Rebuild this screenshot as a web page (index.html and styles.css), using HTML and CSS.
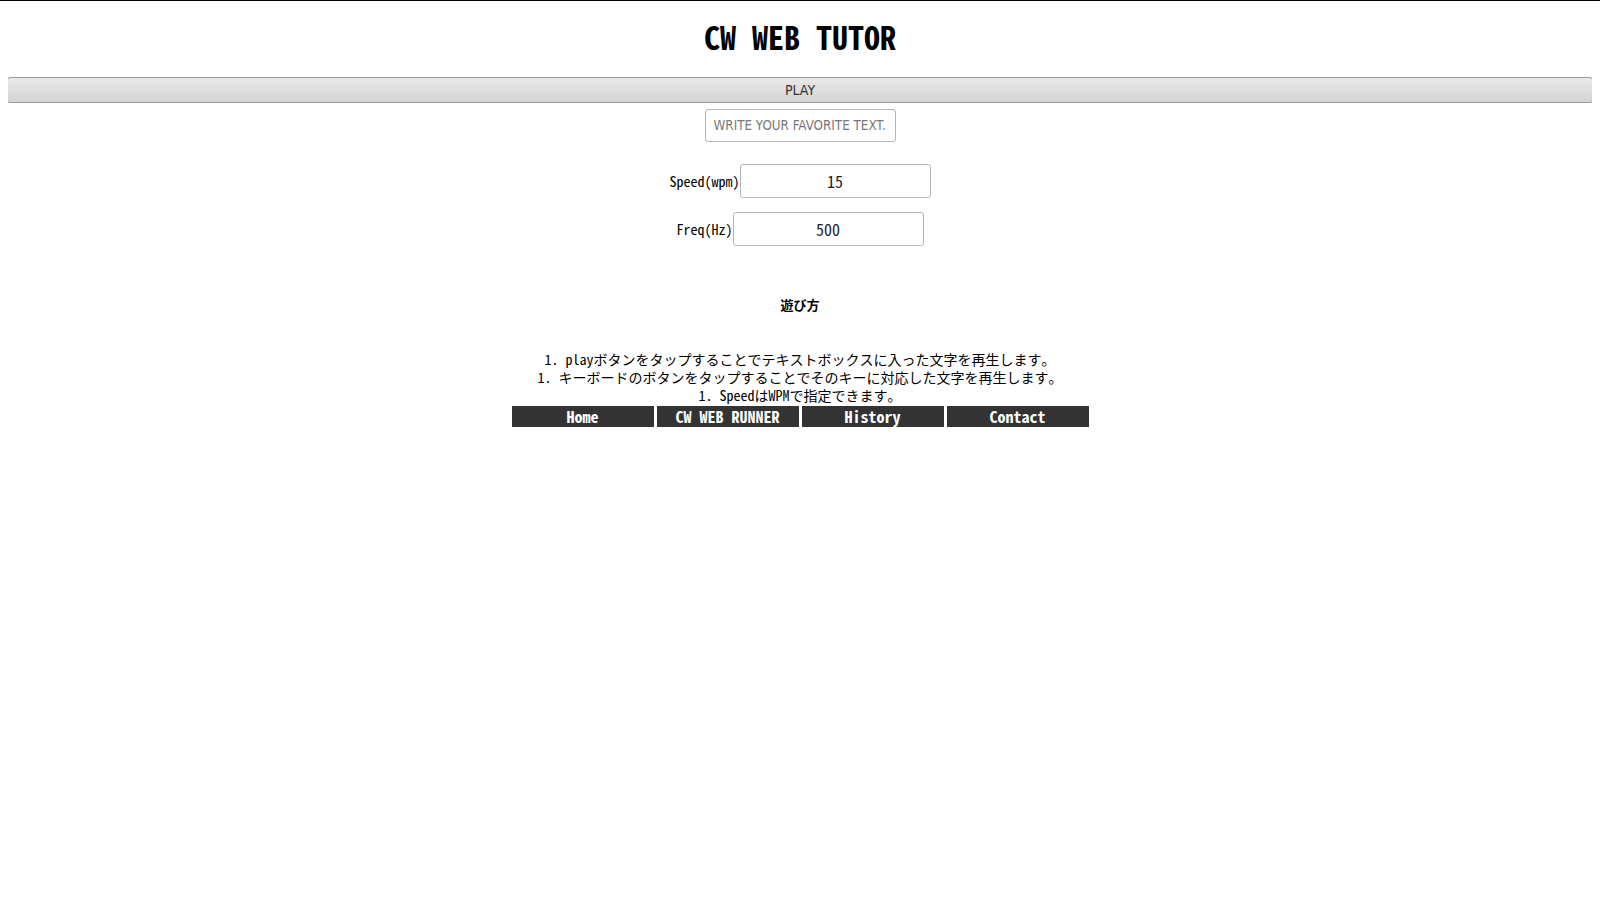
FILE: index.html
```html
<!DOCTYPE html>
<html lang="ja">
<head>
<meta charset="utf-8">
<title>CW WEB TUTOR</title>
<link rel="stylesheet" href="styles.css">
</head>
<body>
<h1 class="title">CW WEB TUTOR</h1>
<div class="play-wrap"><button class="play-btn" type="button">PLAY</button></div>
<div class="text-row"><input class="text-input" type="text" placeholder="WRITE YOUR FAVORITE TEXT."></div>
<div class="field-row first-field"><label class="field-label">Speed(wpm)</label><input class="num-input" type="text" value="15"></div>
<div class="field-row"><label class="field-label">Freq(Hz)</label><input class="num-input" type="text" value="500"></div>
<h5 class="howto">遊び方</h5>
<ol class="steps first-step"><li>playボタンをタップすることでテキストボックスに入った文字を再生します。</li></ol>
<ol class="steps"><li>キーボードのボタンをタップすることでそのキーに対応した文字を再生します。</li></ol>
<ol class="steps"><li>SpeedはWPMで指定できます。</li></ol>
<nav class="nav">
<a class="nav-item" href="#">Home</a>
<a class="nav-item" href="#">CW WEB RUNNER</a>
<a class="nav-item" href="#">History</a>
<a class="nav-item" href="#">Contact</a>
</nav>
</body>
</html>
```
FILE: styles.css
```css
html {
  border-top: 1px solid #000;
  background: #fff;
}
body {
  margin: 8px;
  font-family: "Noto Sans Mono CJK JP", "Noto Sans CJK JP", monospace;
  font-size: 14px;
  color: #000;
  text-align: center;
}
.title {
  font-size: 32px;
  font-weight: bold;
  line-height: 40px;
  margin: 7px 0 21px;
}
.play-wrap {
  margin: 0 -1px;
}
.play-btn {
  display: block;
  width: 100%;
  height: 26px;
  border: 1px solid #9a9a9a;
  border-radius: 3px;
  background: linear-gradient(#e9e9e9, #d3d3d3);
  font-family: "Liberation Sans Narrow", "DejaVu Sans Condensed", "Liberation Sans", sans-serif;
  font-stretch: condensed;
  font-size: 14px;
  color: #333;
  padding: 0;
}
.text-row {
  display: flex;
  justify-content: center;
  margin-top: 6px;
}
.text-input {
  width: 191px;
  height: 33px;
  box-sizing: border-box;
  border: 1px solid #b5b5b5;
  border-radius: 3px;
  font-family: "Liberation Sans Narrow", "DejaVu Sans Condensed", "Liberation Sans", sans-serif;
  font-stretch: condensed;
  font-size: 13.3px;
  padding: 0 4px 0 8px;
  text-align: left;
}
.text-input::placeholder {
  color: #777;
}
.field-row {
  display: flex;
  justify-content: center;
  align-items: center;
  margin-top: 14px;
}
.first-field {
  margin-top: 22px;
}
.field-label {
  font-size: 14px;
}
.num-input {
  width: 191px;
  height: 34px;
  box-sizing: border-box;
  border: 1px solid #b5b5b5;
  border-radius: 3px;
  font-family: "Noto Sans Mono CJK JP", "Noto Sans CJK JP", monospace;
  font-size: 16px;
  font-weight: normal;
  color: #222;
  text-align: center;
  margin: 0;
}
.howto {
  font-size: 13px;
  font-weight: bold;
  margin: 50px 0 0;
  line-height: 18px;
}
.steps {
  list-style-position: inside;
  margin: 0;
  padding: 0;
  font-size: 14px;
  line-height: 18px;
}
.first-step {
  margin-top: 36px;
}
.nav {
  display: flex;
  justify-content: center;
  gap: 3px;
  margin-top: 2px;
}
.nav-item {
  display: block;
  width: 142px;
  height: 21px;
  line-height: 21px;
  background: #333;
  color: #fff;
  font-weight: bold;
  font-size: 16px;
  text-decoration: none;
}
```
